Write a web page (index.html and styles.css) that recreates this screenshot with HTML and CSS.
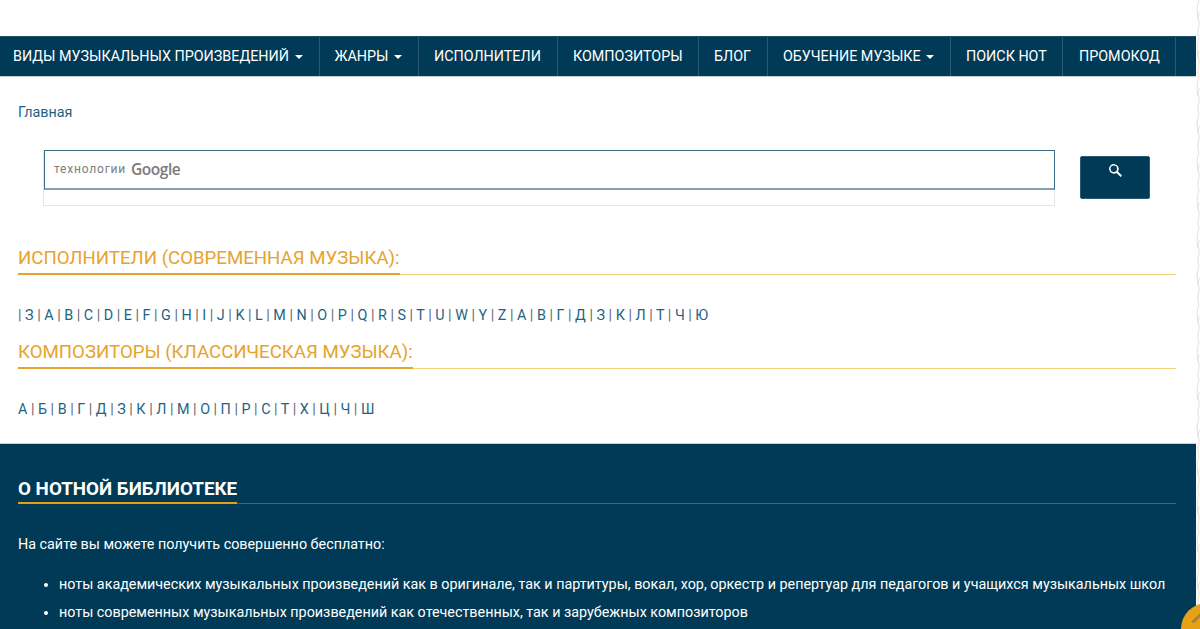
FILE: index.html
```html
<!DOCTYPE html>
<html lang="ru">
<head>
<meta charset="utf-8">
<title>Нотная библиотека</title>
<link rel="stylesheet" href="styles.css">
</head>
<body>
<div class="page">
  <nav class="nav">
    <a class="nav-item w1">ВИДЫ МУЗЫКАЛЬНЫХ ПРОИЗВЕДЕНИЙ <i class="caret"></i></a>
    <a class="nav-item w2">ЖАНРЫ <i class="caret"></i></a>
    <a class="nav-item w3">ИСПОЛНИТЕЛИ</a>
    <a class="nav-item w4">КОМПОЗИТОРЫ</a>
    <a class="nav-item w5">БЛОГ</a>
    <a class="nav-item w6">ОБУЧЕНИЕ МУЗЫКЕ <i class="caret"></i></a>
    <a class="nav-item w7">ПОИСК НОТ</a>
    <a class="nav-item w8">ПРОМОКОД</a>
  </nav>
  <main class="content">
    <div class="crumb"><a>Главная</a></div>
    <div class="search">
      <div class="search-left">
        <div class="search-input"><span class="tech">технологии</span> <span class="google">Google</span></div>
      </div>
      <button class="search-btn" aria-label="Поиск">
        <svg width="13" height="13" viewBox="0 0 13 13"><path d="M11.6 13 7.5 8.9A4.8 4.8 0 1 1 8.9 7.5L13 11.6 11.6 13ZM4.8 8A3.2 3.2 0 1 0 4.8 1.6 3.2 3.2 0 0 0 4.8 8Z" fill="#fff"/></svg>
      </button>
    </div>
    <h2 class="head"><span>ИСПОЛНИТЕЛИ (СОВРЕМЕННАЯ МУЗЫКА):</span></h2>
    <p class="letters"><span class="sep">|</span> <a>З</a> <span class="sep">|</span> <a>А</a> <span class="sep">|</span> <a>B</a> <span class="sep">|</span> <a>C</a> <span class="sep">|</span> <a>D</a> <span class="sep">|</span> <a>E</a> <span class="sep">|</span> <a>F</a> <span class="sep">|</span> <a>G</a> <span class="sep">|</span> <a>H</a> <span class="sep">|</span> <a>I</a> <span class="sep">|</span> <a>J</a> <span class="sep">|</span> <a>K</a> <span class="sep">|</span> <a>L</a> <span class="sep">|</span> <a>M</a> <span class="sep">|</span> <a>N</a> <span class="sep">|</span> <a>O</a> <span class="sep">|</span> <a>P</a> <span class="sep">|</span> <a>Q</a> <span class="sep">|</span> <a>R</a> <span class="sep">|</span> <a>S</a> <span class="sep">|</span> <a>T</a> <span class="sep">|</span> <a>U</a> <span class="sep">|</span> <a>W</a> <span class="sep">|</span> <a>Y</a> <span class="sep">|</span> <a>Z</a> <span class="sep">|</span> <a>А</a> <span class="sep">|</span> <a>В</a> <span class="sep">|</span> <a>Г</a> <span class="sep">|</span> <a>Д</a> <span class="sep">|</span> <a>З</a> <span class="sep">|</span> <a>К</a> <span class="sep">|</span> <a>Л</a> <span class="sep">|</span> <a>Т</a> <span class="sep">|</span> <a>Ч</a> <span class="sep">|</span> <a>Ю</a></p>
    <h2 class="head"><span>КОМПОЗИТОРЫ (КЛАССИЧЕСКАЯ МУЗЫКА):</span></h2>
    <p class="letters"><a>А</a> <span class="sep">|</span> <a>Б</a> <span class="sep">|</span> <a>В</a> <span class="sep">|</span> <a>Г</a> <span class="sep">|</span> <a>Д</a> <span class="sep">|</span> <a>З</a> <span class="sep">|</span> <a>К</a> <span class="sep">|</span> <a>Л</a> <span class="sep">|</span> <a>М</a> <span class="sep">|</span> <a>О</a> <span class="sep">|</span> <a>П</a> <span class="sep">|</span> <a>Р</a> <span class="sep">|</span> <a>С</a> <span class="sep">|</span> <a>Т</a> <span class="sep">|</span> <a>Х</a> <span class="sep">|</span> <a>Ц</a> <span class="sep">|</span> <a>Ч</a> <span class="sep">|</span> <a>Ш</a></p>
  </main>
  <footer class="footer">
    <h2 class="foot-head"><span>О НОТНОЙ БИБЛИОТЕКЕ</span></h2>
    <p class="foot-text">На сайте вы можете получить совершенно бесплатно:</p>
    <ul class="foot-list">
      <li>ноты академических музыкальных произведений как в оригинале, так и партитуры, вокал, хор, оркестр и репертуар для педагогов и учащихся музыкальных школ</li>
      <li>ноты современных музыкальных произведений как отечественных, так и зарубежных композиторов</li>
    </ul>
  </footer>
</div>
<svg class="strip" width="4" height="629" aria-hidden="true">
  <defs>
    <pattern id="swirl" width="4" height="38" patternUnits="userSpaceOnUse">
      <path d="M3 0C1 6 .5 12 2 18C3.5 22 3.5 26 2 30C1.5 33 2 36 3 38M4 12C2.5 14 1.5 17 2 20" fill="none" stroke="#e2dfdb" stroke-width="1"/>
    </pattern>
  </defs>
  <rect width="4" height="629" fill="url(#swirl)"/>
</svg>
<div class="fab">
  <svg width="52" height="52" viewBox="0 0 52 52" aria-hidden="true"><path d="M11.5 19.5 20 11" stroke="#a98332" stroke-width="3"/></svg>
</div>
</body>
</html>
```
FILE: styles.css
```css
html, body { margin: 0; padding: 0; height: 629px; overflow: hidden; background: #fff; }
body { font-family: Roboto, "Liberation Sans", sans-serif; font-size: 14.33px; color: #1d6484; display: flex; }
.page { width: 1196px; flex: none; padding-top: 36px; box-sizing: border-box; }
.strip { flex: none; display: block; }
.nav { display: flex; background: #003a56; border-bottom: 1px solid #c4d0d6; height: 38px; padding-bottom: 1px; border-top: 1px solid #1d5069; }
.nav-item { display: flex; align-items: center; padding-left: 15px; color: #fff; font-size: 14.33px; box-sizing: border-box; height: 39px; padding-bottom: 2px; border-right: 1px solid #2c5a72; white-space: pre; }
.w1 { width: 320px; padding-left: 13px; }
.w2 { width: 99px; padding-left: 14.5px; }
.w3 { width: 139px; }
.w4 { width: 141px; }
.w5 { width: 69px; }
.w6 { width: 183px; }
.w7 { width: 112px; }
.w8 { width: 113px; padding-left: 16px; }
.caret { display: inline-block; width: 0; height: 0; margin-left: 2px; margin-top: 2px; border-left: 4px solid transparent; border-right: 4px solid transparent; border-top: 4px solid #fff; }
.content { padding: 0 20px 0 18px; height: 366px; overflow: hidden; }
.crumb { margin-top: 27px; line-height: 17px; height: 17px; }
.search { display: flex; margin-top: 29px; margin-left: 25px; height: 56px; }
.search-left { width: 1012px; height: 56px; box-sizing: border-box; border: 1px solid #e4e6e8; border-top: 0; }
.search-input { width: 1011px; height: 40px; box-sizing: border-box; border: 1px solid #3c6b85; border-bottom: 2px solid #84a0b0; display: flex; align-items: center; padding: 0 0 2px 9px; gap: 5px; background: #fff; }
.tech { font-size: 12px; letter-spacing: .8px; color: #7d7d7d; }
.google { font-family: "Open Sans", sans-serif; font-size: 15.5px; font-weight: 600; color: #7b7b7b; letter-spacing: -.45px; }
.search-btn { width: 70px; height: 43px; margin: 6px 0 0 25px; padding: 7px 0 0; background: #003a56; border: 1px solid #2a5a74; border-radius: 2px; display: flex; justify-content: center; align-items: flex-start; }
.head { margin: 33px 0 0; font-size: 18.65px; font-weight: 400; line-height: 24px; color: #e6a32e; border-bottom: 1px solid #f6d27f; height: 35px; }
.head span { display: inline-block; height: 36px; box-sizing: border-box; border-bottom: 2px solid #e6a32e; padding-top: 7px; white-space: nowrap; }
.letters { margin: 32px 0 0; line-height: 17px; height: 17px; white-space: nowrap; }
.letters + .head { margin-top: 9px; }
.sep { color: #5e6a72; }
.footer { background: #003a56; border-top: 1px solid #c9d2d7; box-sizing: border-box; height: 186px; padding: 24px 20px 0 18px; color: #fff; overflow: hidden; }
.foot-head { margin: 0; font-size: 18.8px; font-weight: 700; line-height: 24px; border-bottom: 1px solid #5a663c; height: 35px; }
.foot-head span { display: inline-block; height: 36px; box-sizing: border-box; border-bottom: 2px solid #e8a010; padding-top: 9px; white-space: nowrap; }
.foot-text { margin: 32px 0 0; line-height: 17px; }
.foot-list { margin: 23px 0 0; padding: 0 0 0 41px; line-height: 17px; }
.foot-list li { margin-bottom: 11px; white-space: nowrap; }
.fab { position: fixed; left: 1181px; top: 603px; width: 52px; height: 52px; border-radius: 50%; background: #e6a117; }
```
